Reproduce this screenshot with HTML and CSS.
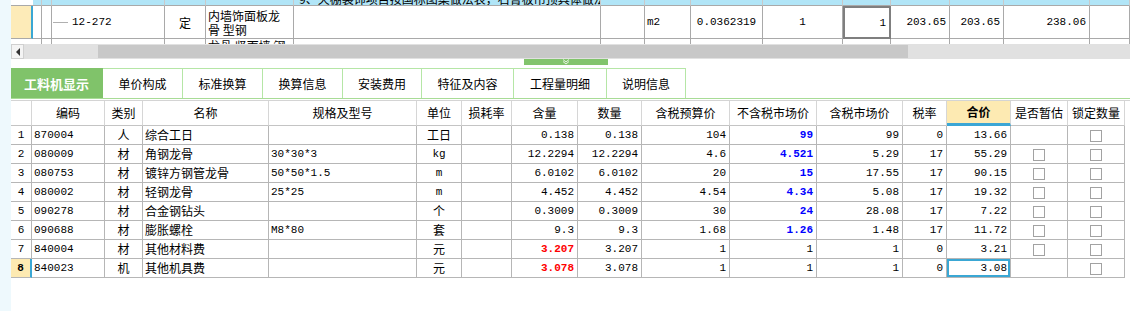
FILE: index.html
```html
<!DOCTYPE html>
<html lang="zh-CN">
<head>
<meta charset="utf-8">
<title>工料机显示</title>
<link rel="stylesheet" href="styles.css">
</head>
<body>
<div class="app">
  <div class="side"></div>
  <div class="main">
    <div class="top">
      <div class="trow trow-head">
        <div class="tc tc-pale"></div><div class="tc"></div><div class="tc"></div><div class="tc"></div><div class="tc"></div><div class="tc"></div>
        <div class="tc tc-text">9、天棚装饰项目按国标图集做法表，石膏板吊顶具体做法详见图</div>
        <div class="tc"></div><div class="tc"></div><div class="tc"></div><div class="tc"></div><div class="tc"></div><div class="tc"></div><div class="tc"></div><div class="tc"></div><div class="tc"></div>
      </div>
      <div class="trow trow-main">
        <div class="tc tc-sel"></div>
        <div class="tc"></div>
        <div class="tc"></div>
        <div class="tc tc-code"><span class="tree"></span><span class="num">12-272</span></div>
        <div class="tc tc-center">定</div>
        <div class="tc tc-name">内墙饰面板龙骨 型钢</div>
        <div class="tc"></div>
        <div class="tc"></div>
        <div class="tc tc-left num">m2</div>
        <div class="tc tc-center num">0.0362319</div>
        <div class="tc tc-center num">1</div>
        <div class="tc tc-box num">1</div>
        <div class="tc tc-right num">203.65</div>
        <div class="tc tc-right num">203.65</div>
        <div class="tc tc-right num">238.06</div>
        <div class="tc"></div>
      </div>
      <div class="trow trow-next">
        <div class="tc tc-pale"></div><div class="tc"></div><div class="tc"></div><div class="tc"></div><div class="tc"></div>
        <div class="tc tc-name2">龙骨 竖面墙 钢</div>
        <div class="tc"></div><div class="tc"></div><div class="tc"></div><div class="tc"></div><div class="tc"></div><div class="tc"></div><div class="tc"></div><div class="tc"></div><div class="tc"></div><div class="tc"></div>
      </div>
    </div>

    <div class="hscroll">
      <div class="sbtn"><span class="tri"></span></div>
      <div class="strack"><div class="sthumb"></div></div>
    </div>

    <div class="gap">
      <div class="handle">
        <svg width="10" height="6" viewBox="0 0 10 6"><path d="M2 0.5 L5 3 L8 0.5 M2 2.5 L5 5 L8 2.5" fill="none" stroke="#e8f5e2" stroke-width="1"/></svg>
      </div>
    </div>

    <div class="tabs">
      <div class="tab tab-active" style="width:92px">工料机显示</div>
      <div class="tab" style="width:80px">单价构成</div>
      <div class="tab" style="width:80px">标准换算</div>
      <div class="tab" style="width:80px">换算信息</div>
      <div class="tab" style="width:79px">安装费用</div>
      <div class="tab" style="width:92px">特征及内容</div>
      <div class="tab" style="width:93px">工程量明细</div>
      <div class="tab" style="width:79px">说明信息</div>
    </div>

    <div class="grid">
      <div class="ghead">
        <div class="hc hc-first"></div>
        <div class="hc">编码</div>
        <div class="hc">类别</div>
        <div class="hc">名称</div>
        <div class="hc">规格及型号</div>
        <div class="hc">单位</div>
        <div class="hc">损耗率</div>
        <div class="hc">含量</div>
        <div class="hc">数量</div>
        <div class="hc">含税预算价</div>
        <div class="hc">不含税市场价</div>
        <div class="hc">含税市场价</div>
        <div class="hc">税率</div>
        <div class="hc hc-active">合价</div>
        <div class="hc">是否暂估</div>
        <div class="hc">锁定数量</div>
      </div>

      <div class="grow">
        <div class="c c-no num">1</div><div class="c c-l num">870004</div><div class="c c-c">人</div><div class="c c-l">综合工日</div><div class="c c-l num"></div><div class="c c-c">工日</div><div class="c"></div>
        <div class="c c-r num">0.138</div><div class="c c-r num">0.138</div><div class="c c-r num">104</div><div class="c c-r num blue">99</div><div class="c c-r num">99</div><div class="c c-r num">0</div><div class="c c-r num">13.66</div>
        <div class="c c-c"></div><div class="c c-c"><span class="cb"></span></div>
      </div>
      <div class="grow">
        <div class="c c-no num">2</div><div class="c c-l num">080009</div><div class="c c-c">材</div><div class="c c-l">角钢龙骨</div><div class="c c-l num">30*30*3</div><div class="c c-c num">kg</div><div class="c"></div>
        <div class="c c-r num">12.2294</div><div class="c c-r num">12.2294</div><div class="c c-r num">4.6</div><div class="c c-r num blue">4.521</div><div class="c c-r num">5.29</div><div class="c c-r num">17</div><div class="c c-r num">55.29</div>
        <div class="c c-c"><span class="cb"></span></div><div class="c c-c"><span class="cb"></span></div>
      </div>
      <div class="grow">
        <div class="c c-no num">3</div><div class="c c-l num">080753</div><div class="c c-c">材</div><div class="c c-l">镀锌方钢管龙骨</div><div class="c c-l num">50*50*1.5</div><div class="c c-c num">m</div><div class="c"></div>
        <div class="c c-r num">6.0102</div><div class="c c-r num">6.0102</div><div class="c c-r num">20</div><div class="c c-r num blue">15</div><div class="c c-r num">17.55</div><div class="c c-r num">17</div><div class="c c-r num">90.15</div>
        <div class="c c-c"><span class="cb"></span></div><div class="c c-c"><span class="cb"></span></div>
      </div>
      <div class="grow">
        <div class="c c-no num">4</div><div class="c c-l num">080002</div><div class="c c-c">材</div><div class="c c-l">轻钢龙骨</div><div class="c c-l num">25*25</div><div class="c c-c num">m</div><div class="c"></div>
        <div class="c c-r num">4.452</div><div class="c c-r num">4.452</div><div class="c c-r num">4.54</div><div class="c c-r num blue">4.34</div><div class="c c-r num">5.08</div><div class="c c-r num">17</div><div class="c c-r num">19.32</div>
        <div class="c c-c"><span class="cb"></span></div><div class="c c-c"><span class="cb"></span></div>
      </div>
      <div class="grow">
        <div class="c c-no num">5</div><div class="c c-l num">090278</div><div class="c c-c">材</div><div class="c c-l">合金钢钻头</div><div class="c c-l num"></div><div class="c c-c">个</div><div class="c"></div>
        <div class="c c-r num">0.3009</div><div class="c c-r num">0.3009</div><div class="c c-r num">30</div><div class="c c-r num blue">24</div><div class="c c-r num">28.08</div><div class="c c-r num">17</div><div class="c c-r num">7.22</div>
        <div class="c c-c"><span class="cb"></span></div><div class="c c-c"><span class="cb"></span></div>
      </div>
      <div class="grow">
        <div class="c c-no num">6</div><div class="c c-l num">090688</div><div class="c c-c">材</div><div class="c c-l">膨胀螺栓</div><div class="c c-l num">M8*80</div><div class="c c-c">套</div><div class="c"></div>
        <div class="c c-r num">9.3</div><div class="c c-r num">9.3</div><div class="c c-r num">1.68</div><div class="c c-r num blue">1.26</div><div class="c c-r num">1.48</div><div class="c c-r num">17</div><div class="c c-r num">11.72</div>
        <div class="c c-c"><span class="cb"></span></div><div class="c c-c"><span class="cb"></span></div>
      </div>
      <div class="grow">
        <div class="c c-no num">7</div><div class="c c-l num">840004</div><div class="c c-c">材</div><div class="c c-l">其他材料费</div><div class="c c-l num"></div><div class="c c-c">元</div><div class="c"></div>
        <div class="c c-r num red">3.207</div><div class="c c-r num">3.207</div><div class="c c-r num">1</div><div class="c c-r num">1</div><div class="c c-r num">1</div><div class="c c-r num">0</div><div class="c c-r num">3.21</div>
        <div class="c c-c"><span class="cb"></span></div><div class="c c-c"><span class="cb"></span></div>
      </div>
      <div class="grow">
        <div class="c c-no c-no-sel num">8</div><div class="c c-l num">840023</div><div class="c c-c">机</div><div class="c c-l">其他机具费</div><div class="c c-l num"></div><div class="c c-c">元</div><div class="c"></div>
        <div class="c c-r num red">3.078</div><div class="c c-r num">3.078</div><div class="c c-r num">1</div><div class="c c-r num">1</div><div class="c c-r num">1</div><div class="c c-r num">0</div><div class="c c-r num c-focus">3.08</div>
        <div class="c c-c"></div><div class="c c-c"><span class="cb"></span></div>
      </div>
    </div>
  </div>
</div>
</body>
</html>
```
FILE: styles.css
```css
* { box-sizing: border-box; }

body {
  margin: 0;
  width: 1130px;
  height: 311px;
  overflow: hidden;
  background: #ffffff;
  font-family: "Noto Sans CJK SC", sans-serif;
  font-size: 12px;
  color: #000;
}

.num {
  font-family: "Liberation Mono", "Noto Sans CJK SC", monospace;
  font-size: 11px;
}

.app { display: flex; height: 311px; }
.side { width: 11px; flex: none; background: #eef9fd; }
.main { width: 1119px; flex: none; display: flex; flex-direction: column; }

/* ---------- top (upper grid, scrolled) ---------- */
.top { height: 44px; overflow: hidden; flex: none; }
.trow {
  display: grid;
  grid-template-columns: 22px 9px 10px 113px 41px 88px 307px 44px 46px 72px 80px 48px 59px 54px 86px 40px;
}
.tc {
  border-right: 1px solid #a9a9a9;
  border-bottom: 1px solid #a9a9a9;
  overflow: hidden;
  white-space: nowrap;
  display: flex;
  align-items: center;
}
.trow-head { height: 6px; }
.trow-head .tc {
  height: 6px;
  background: #b1e5f7;
  border-right-color: #c9c9c9;
  align-items: flex-end;
  line-height: 12px;
}
.trow-head .tc-pale { background: #ffffff; border-right: none; }
.tc-text { padding-left: 5px; }

.trow-main { height: 33px; }
.trow-main .tc { height: 33px; }
.tc-sel { background: #fdebb8; border-right: 2px solid #3aa7d4 !important; }
.tc-code { padding-left: 1px; }
.tree { width: 15px; height: 1px; background: #b0b0b0; margin-right: 4px; flex: none; }
.tc-center { justify-content: center; }
.tc-left { padding-left: 2px; }
.tc-right { justify-content: flex-end; padding-right: 3px; }
.tc-name {
  white-space: normal;
  line-height: 14px;
  padding: 1px 2px 0 2px;
  font-size: 12px;
  word-break: break-all;
}
.tc-box {
  justify-content: flex-end;
  padding-right: 3px;
  border: 2px solid #7f7f7f !important;
}

.trow-next { height: 5px; }
.trow-next .tc {
  height: 5px;
  border-bottom: none;
  align-items: flex-start;
  line-height: 12px;
}
.trow-next .tc-pale { border-right: none; }
.tc-name2 { padding-left: 2px; padding-top: 1px; }

/* ---------- horizontal scrollbar ---------- */
.hscroll { height: 15px; flex: none; display: flex; background: #e1e1e1; }
.sbtn {
  width: 13px;
  height: 15px;
  background: #f4f4f4;
  border: 1px solid #d0d0d0;
  display: flex;
  align-items: center;
  justify-content: center;
}
.tri {
  width: 0; height: 0;
  border-top: 4px solid transparent;
  border-bottom: 4px solid transparent;
  border-right: 4px solid #333;
}
.strack { flex: 1; padding: 1px 0 1px 74px; }
.sthumb { width: 810px; height: 13px; background: #c8c8c8; }

/* ---------- splitter gap ---------- */
.gap { height: 9px; flex: none; padding-left: 513px; }
.handle {
  width: 84px;
  height: 6px;
  background: #82c46c;
  display: flex;
  justify-content: center;
  align-items: flex-start;
}
.handle svg { display: block; }

/* ---------- tabs ---------- */
.tabs {
  height: 31px;
  flex: none;
  display: flex;
  border-bottom: 1px solid #a8dc96;
}
.tab {
  height: 30px;
  border-top: 1px solid #b5e6a6;
  border-right: 1px solid #b5e6a6;
  display: flex;
  align-items: center;
  justify-content: center;
  font-size: 12px;
  color: #000;
}
.tab-active {
  background: #80c36a;
  border-color: #80c36a;
  color: #fff;
  font-weight: bold;
  font-size: 13px;
}

/* ---------- lower grid ---------- */
.grid { margin-top: 1px; }
.ghead, .grow {
  display: grid;
  grid-template-columns: 21px 73px 38px 126px 148px 45px 50px 66px 64px 88px 87px 86px 44px 64px 57px 57px;
}
.ghead { border-top: 1px solid #d4d4d4; }
.hc {
  height: 25px;
  line-height: 24px;
  text-align: center;
  border-right: 1px solid #d6d6d6;
  border-bottom: 1px solid #c4c4c4;
  white-space: nowrap;
  overflow: hidden;
}
.hc-active {
  background: #fdeab2;
  font-weight: bold;
  border-bottom: 3px solid #3ba6d5;
  line-height: 22px;
}

.c {
  height: 19px;
  line-height: 18px;
  border-right: 1px solid #b6b6b6;
  border-bottom: 1px solid #b6b6b6;
  white-space: nowrap;
  overflow: hidden;
}
.c-no { text-align: center; }
.c-no-sel {
  background: #fdeab2;
  font-weight: bold;
  border-right: 2px solid #3aa7d4;
}
.c-l { padding-left: 2px; }
.c-c { text-align: center; }
.c-r { text-align: right; padding-right: 3px; }
.blue { color: #0000ff; font-weight: bold; }
.red { color: #ff0000; font-weight: bold; }
.c-focus { box-shadow: inset 0 0 0 2px #3aa7d4; }

.cb {
  display: inline-block;
  width: 12px;
  height: 12px;
  border: 1px solid #a2a2a2;
  background: #fff;
  vertical-align: middle;
  margin-top: -2px;
}
```
